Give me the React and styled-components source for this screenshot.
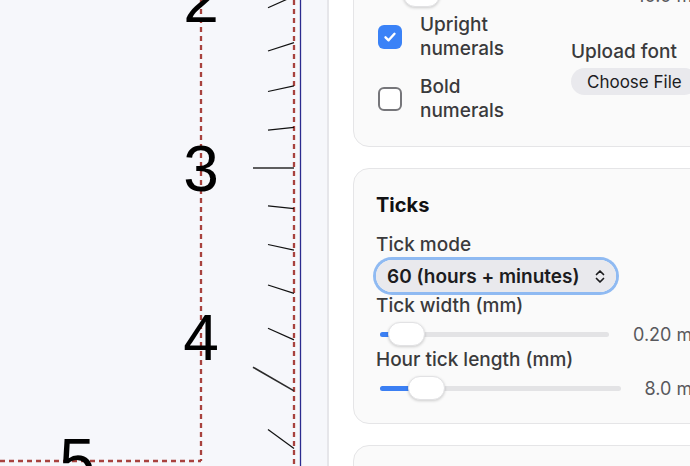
import React, { useLayoutEffect, useRef } from "react";
import styled, { createGlobalStyle } from "styled-components";

const GlobalStyle = createGlobalStyle`
  html, body {
    margin: 0;
    padding: 0;
    overflow: hidden;
    background: #ffffff;
  }
  * {
    box-sizing: border-box;
  }
`;

const Page = styled.div`
  display: flex;
  height: 100vh;
  width: 100vw;
  overflow: hidden;
  font-family: Inter, "Noto Sans", sans-serif;
`;

const CanvasArea = styled.div`
  flex: 0 0 329px;
  height: 100%;
  background: #f6f7fb;
  border-right: 2px solid #e6e6ea;
  overflow: hidden;
`;

const Sidebar = styled.div`
  flex: 0 0 410px;
  height: 100%;
  overflow: hidden;
  background: #ffffff;
  padding: 0 24px 40px 24px;
`;

const Stack = styled.div`
  display: flex;
  flex-direction: column;
  gap: 21px;
  padding-top: 40px;
`;

const Card = styled.section`
  background: #fafafa;
  border: 1px solid #e5e5e7;
  border-radius: 16px;
  padding: 24px 22px 20px 22px;
  width: 378px;
`;

const CardTitle = styled.h3`
  margin: 0 0 17px 0;
  font-size: 20px;
  line-height: 24px;
  font-weight: 700;
  color: #111113;
`;

const Field = styled.div`
  display: flex;
  flex-direction: column;
  align-items: flex-start;
`;

const Label = styled.label`
  font-size: 19px;
  line-height: 22px;
  font-weight: 500;
  color: #3a3a3c;
`;

const SliderRow = styled.div`
  display: flex;
  align-items: center;
  gap: 24px;
  height: 30px;
  margin-top: 2px;
  width: 100%;
`;

const Track = styled.div`
  position: relative;
  flex: 1;
  height: 5px;
  margin-left: 4px;
  border-radius: 3px;
  background: #e3e3e5;
`;

const Fill = styled.div`
  position: absolute;
  left: 0;
  top: 0;
  bottom: 0;
  border-radius: 3px;
  background: #3b7ff3;
`;

const Thumb = styled.div`
  position: absolute;
  top: 50%;
  width: 37px;
  height: 24px;
  margin-top: -12px;
  border-radius: 12px;
  background: #ffffff;
  border: 1px solid #e2e2e4;
  box-shadow: 0 1px 3px rgba(0, 0, 0, 0.18);
`;

const Value = styled.span`
  font-size: 18px;
  color: #58585c;
  white-space: nowrap;
`;

const Options = styled.div`
  display: grid;
  grid-template-columns: 178px 1fr;
  column-gap: 17px;
  align-items: center;
  margin: 3px 0 3px 0;
`;

const CheckList = styled.div`
  display: flex;
  flex-direction: column;
  gap: 14px;
`;

const CheckRow = styled.label`
  display: flex;
  align-items: center;
  gap: 18px;
  padding-left: 2px;
  font-size: 19px;
  line-height: 24px;
  font-weight: 500;
  color: #3a3a3c;
`;

const Box = styled.span`
  flex: 0 0 24px;
  width: 24px;
  height: 24px;
  border-radius: 6px;
  display: flex;
  align-items: center;
  justify-content: center;
  background: ${(p) => (p.$checked ? "#3a82f7" : "#ffffff")};
  border: ${(p) => (p.$checked ? "none" : "2px solid #76767a")};
`;

const CheckText = styled.span`
  width: 100px;
`;

const UploadCol = styled.div`
  display: flex;
  flex-direction: column;
  align-items: flex-start;
`;

const FileButton = styled.button`
  margin-top: 5px;
  height: 27px;
  padding: 0 16px;
  border: none;
  border-radius: 14px;
  background: #e9e9ed;
  font-family: inherit;
  font-size: 17px;
  color: #1c1c1e;
  white-space: nowrap;
`;

const SelectWrap = styled.div`
  position: relative;
  margin: 4px 0 3px 0;
  width: 240px;
  height: 32px;
  border-radius: 16px;
  box-shadow: 0 0 0 3px #8fbaf2;
`;

const Select = styled.select`
  appearance: none;
  width: 100%;
  height: 100%;
  border: none;
  border-radius: 16px;
  background: #e9e9ed;
  padding: 0 30px 0 11px;
  font-family: inherit;
  font-size: 19px;
  font-weight: 600;
  color: #1c1c1e;
  outline: none;
`;

const Chevron = styled.svg`
  position: absolute;
  right: 10px;
  top: 9px;
  pointer-events: none;
`;

const Slider = ({ frac, fill, text }) => (
  <SliderRow>
    <Track>
      <Fill style={{ width: fill }} />
      <Thumb style={{ left: `calc(${frac} * (100% - 37px))` }} />
    </Track>
    <Value>{text}</Value>
  </SliderRow>
);

const Check = ({ checked, children, innerRef }) => (
  <CheckRow>
    <Box $checked={checked} ref={innerRef}>
      {checked && (
        <svg width="14" height="14" viewBox="0 0 14 14">
          <path d="M2.5 7.3 L5.6 10.3 L11.5 3.8" fill="none" stroke="#fff" strokeWidth="2.4" strokeLinecap="round" strokeLinejoin="round" />
        </svg>
      )}
    </Box>
    <CheckText>{children}</CheckText>
  </CheckRow>
);

// dial geometry: square face centred off-canvas to the left
const CX = -92;
const CY = 168;
const OUTER = 386;
const INNER_NUM = 293;
const DASH = "#a8423e";

const Dial = () => {
  const ticks = [];
  for (let k = -7; k <= 7; k++) {
    const t = Math.tan((k * 6 * Math.PI) / 180);
    const hour = k % 5 === 0;
    const inner = hour ? OUTER - 41 : OUTER - 26;
    ticks.push(
      <line
        key={k}
        x1={CX + OUTER}
        y1={CY + OUTER * t}
        x2={CX + inner}
        y2={CY + inner * t}
        stroke={hour ? "#2a2a2a" : "#111"}
        strokeWidth={hour ? 1.6 : 1.2}
      />
    );
  }
  const nums = [
    { n: "2", x: CX + INNER_NUM, y: CY - INNER_NUM * Math.tan(Math.PI / 6) },
    { n: "3", x: CX + INNER_NUM, y: CY },
    { n: "4", x: CX + INNER_NUM, y: CY + INNER_NUM * Math.tan(Math.PI / 6) },
    { n: "5", x: CX + INNER_NUM / Math.tan(Math.PI / 3), y: CY + INNER_NUM },
  ];
  return (
    <svg width="329" height="466" viewBox="0 0 329 466">
      <line x1={CX + INNER_NUM} y1={0} x2={CX + INNER_NUM} y2={CY + INNER_NUM} stroke={DASH} strokeWidth="2.3" strokeDasharray="5 4" />
      <line x1={0} y1={CY + INNER_NUM} x2={CX + INNER_NUM} y2={CY + INNER_NUM} stroke={DASH} strokeWidth="2.3" strokeDasharray="5 4" />
      <line x1={CX + OUTER} y1={0} x2={CX + OUTER} y2={466} stroke={DASH} strokeWidth="2.3" strokeDasharray="5 4" />
      <line x1={CX + OUTER + 6.5} y1={0} x2={CX + OUTER + 6.5} y2={466} stroke="#2b2b8f" strokeWidth="1.3" />
      {ticks}
      {nums.map((d) => (
        <text
          key={d.n}
          x={d.x}
          y={d.y + 23}
          textAnchor="middle"
          fontFamily="'Liberation Sans', Arial, sans-serif"
          fontSize="64"
          fill="#000"
        >
          {d.n}
        </text>
      ))}
    </svg>
  );
};

const App = () => {
  const scrollRef = useRef(null);
  const anchorRef = useRef(null);

  useLayoutEffect(() => {
    const s = scrollRef.current;
    const a = anchorRef.current;
    if (!s || !a) return;
    s.scrollTop = a.getBoundingClientRect().top - s.getBoundingClientRect().top - 25;
  }, []);

  return (
    <Page>
      <GlobalStyle />
      <CanvasArea>
        <Dial />
      </CanvasArea>
      <Sidebar ref={scrollRef}>
        <Stack>
          <Card>
            <CardTitle>Numerals</CardTitle>
            <Field>
              <Label>Numeral size (mm)</Label>
              <Slider frac={0.117} fill="42px" text="10.0 mm" />
            </Field>
            <Options>
              <CheckList>
                <Check checked innerRef={anchorRef}>Upright numerals</Check>
                <Check>Bold numerals</Check>
              </CheckList>
              <UploadCol>
                <Label>Upload font</Label>
                <FileButton type="button">Choose File</FileButton>
              </UploadCol>
            </Options>
          </Card>
          <Card>
            <CardTitle>Ticks</CardTitle>
            <Field>
              <Label>Tick mode</Label>
              <SelectWrap>
                <Select defaultValue="60">
                  <option value="12">12 (hours only)</option>
                  <option value="60">60 (hours + minutes)</option>
                </Select>
                <Chevron width="12" height="15" viewBox="0 0 12 15">
                  <path d="M2.5 5.5 L6 2 L9.5 5.5 M2.5 9.5 L6 13 L9.5 9.5" fill="none" stroke="#1c1c1e" strokeWidth="1.7" strokeLinecap="round" strokeLinejoin="round" />
                </Chevron>
              </SelectWrap>
            </Field>
            <Field>
              <Label>Tick width (mm)</Label>
              <Slider frac={0.042} fill="26px" text="0.20 mm" />
            </Field>
            <Field>
              <Label>Hour tick length (mm)</Label>
              <Slider frac={0.137} fill="46px" text="8.0 mm" />
            </Field>
          </Card>
          <Card>
            <CardTitle>Hands</CardTitle>
            <Field>
              <Label>Hand style</Label>
            </Field>
          </Card>
        </Stack>
      </Sidebar>
    </Page>
  );
};

export default App;
